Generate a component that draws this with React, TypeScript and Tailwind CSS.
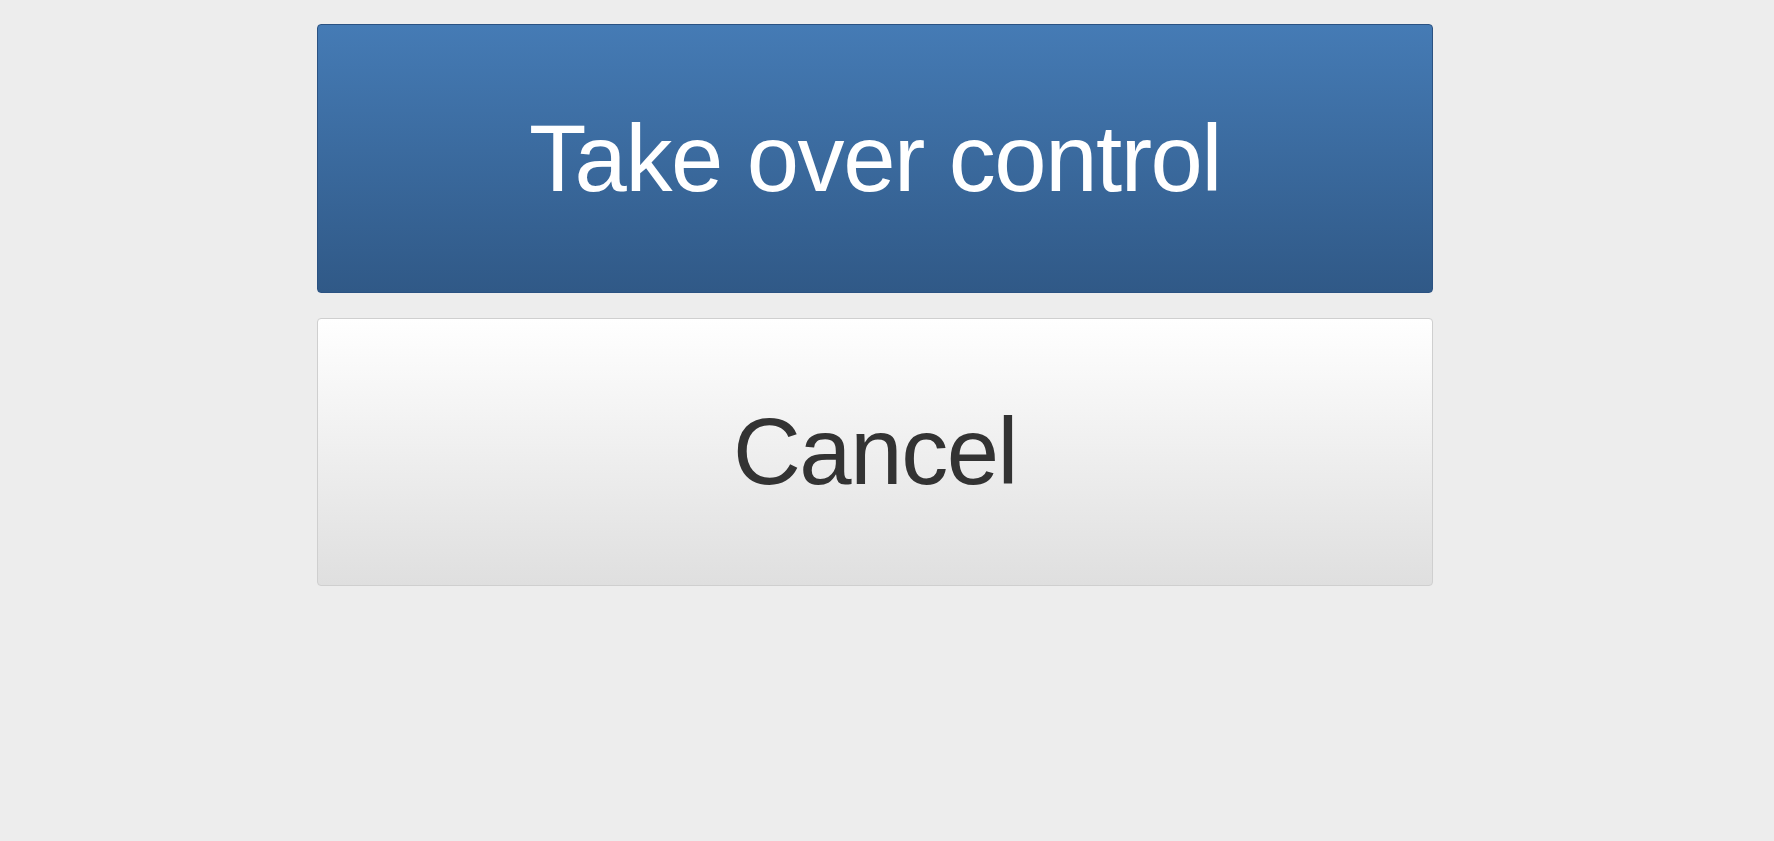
export default function App() {
  return (
    <div className="min-h-[841px] w-full bg-[#ededed] pt-[24px]" style={{ fontFamily: '"Liberation Sans", Arial, sans-serif' }}>
      <div className="ml-[317px] flex w-[1116px] flex-col gap-[25px]">
        <button className="flex h-[269px] w-full items-center justify-center rounded-[4px] border border-[#2b5282] bg-gradient-to-b from-[#457bb5] to-[#305987] text-[94px] leading-none tracking-[-1.4px] text-white">
          Take over control
        </button>
        <button className="flex h-[268px] w-full items-center justify-center rounded-[4px] border border-[#cfcfcf] bg-gradient-to-b from-[#ffffff] to-[#dfdfdf] text-[94px] leading-none tracking-[-1.4px] text-[#333333]">
          Cancel
        </button>
      </div>
    </div>
  );
}
